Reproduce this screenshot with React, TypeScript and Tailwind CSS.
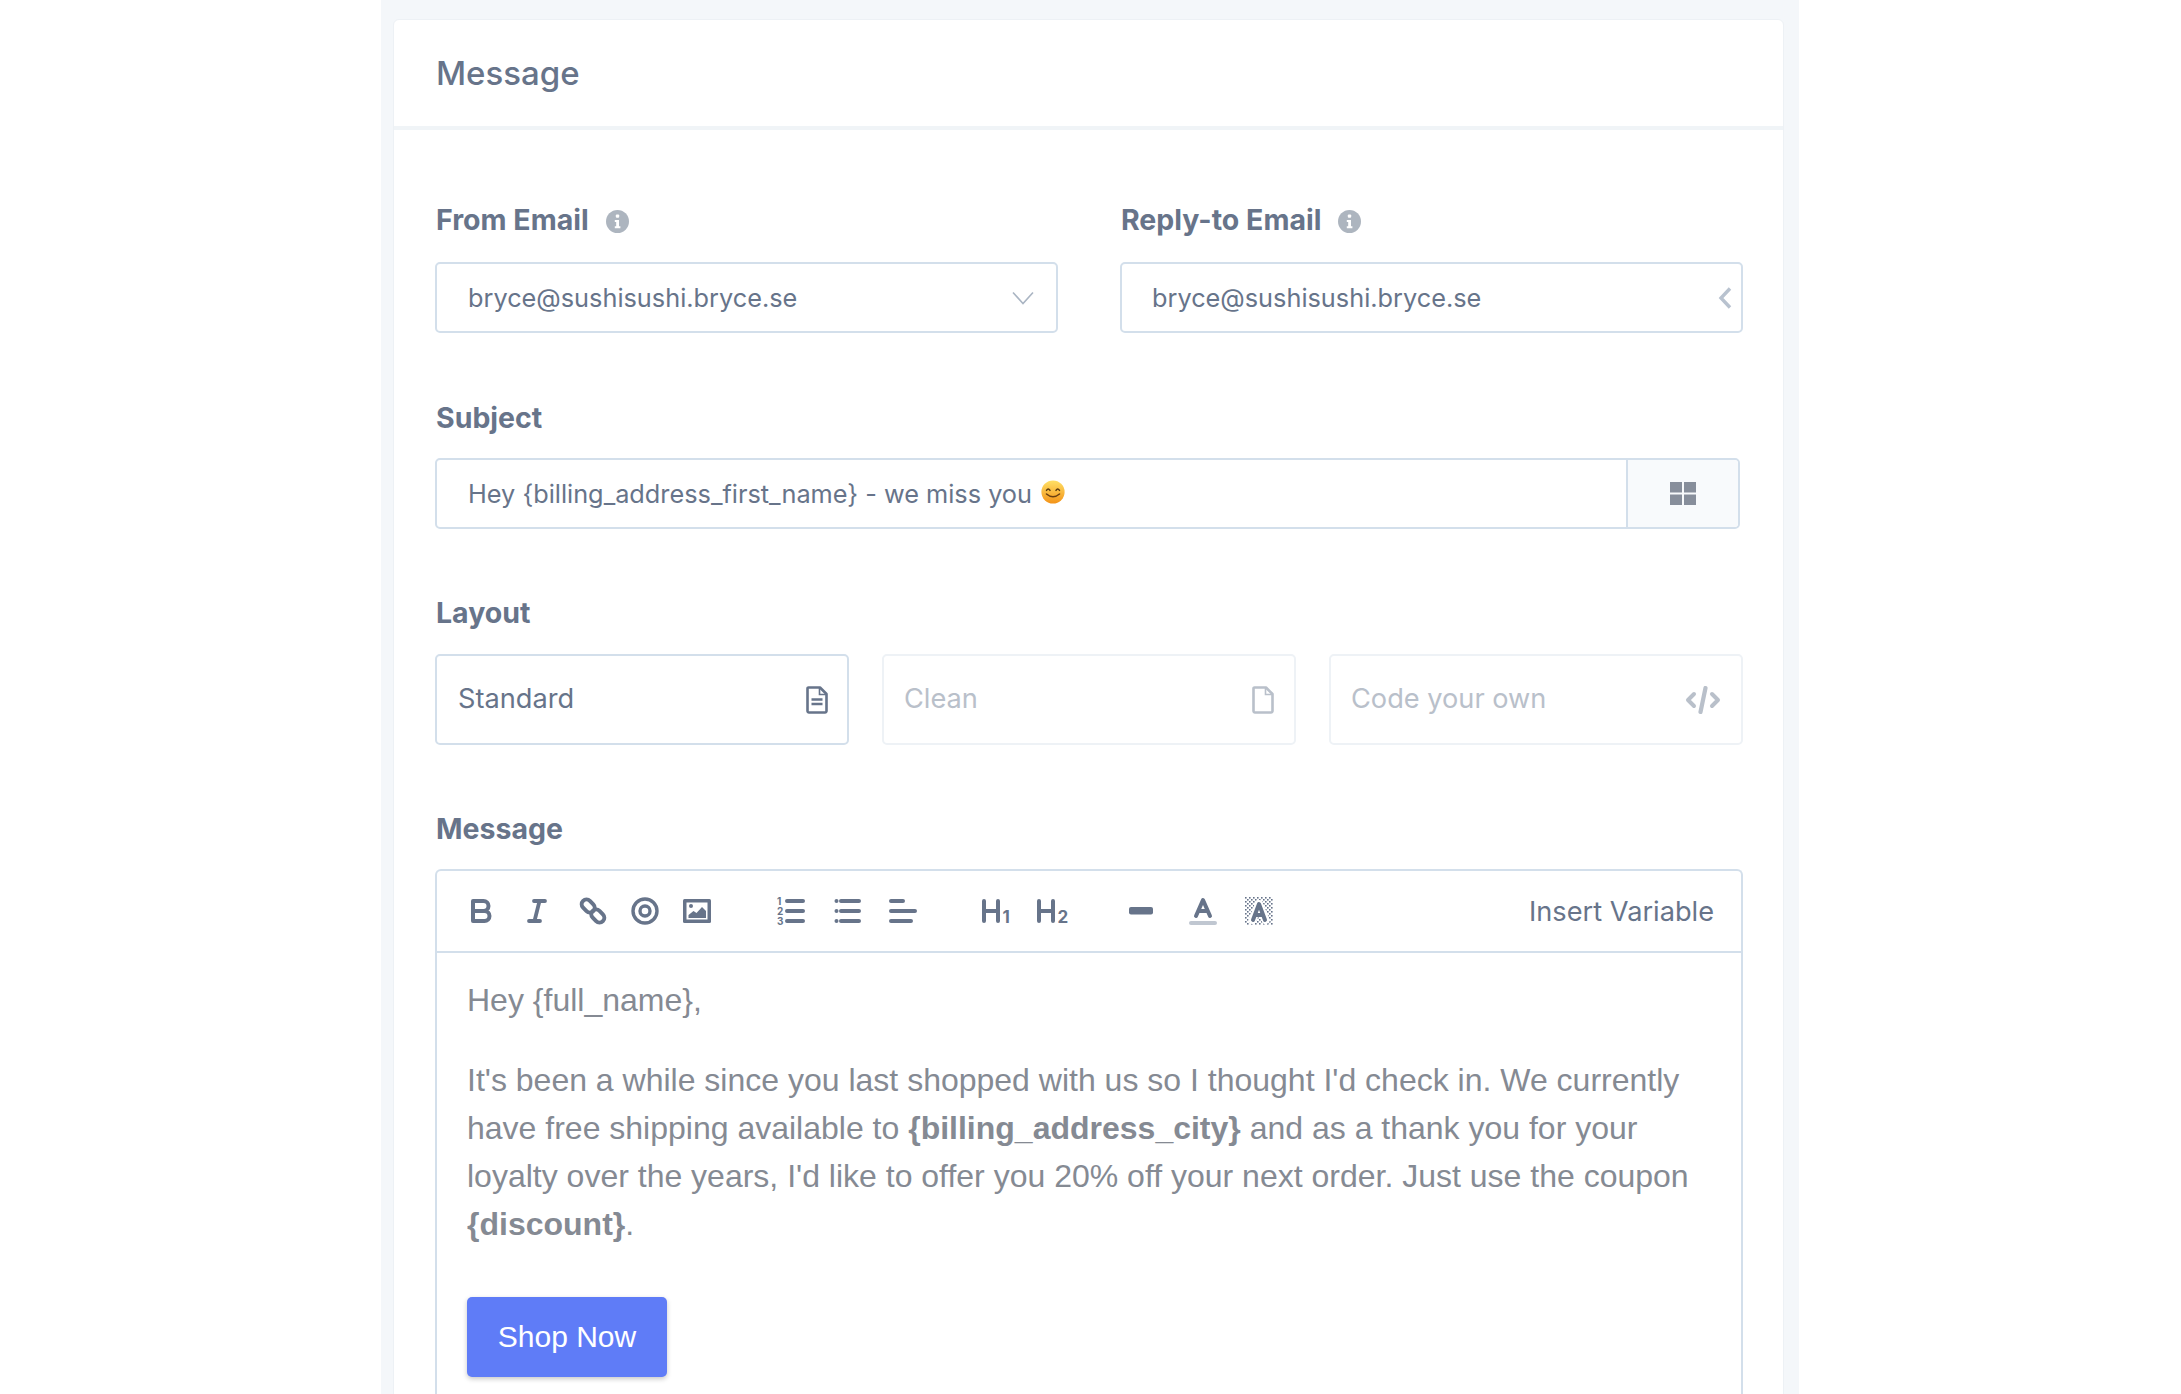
const INK = "#67748a";
const MUTE = "#b9c0ca";

function Info() {
  return (
    <svg width="23" height="23" viewBox="0 0 23 23" className="ml-[17px] mt-[3px] shrink-0">
      <circle cx="11.5" cy="11.5" r="11.5" fill="#adb5bf" />
      <rect x="9.8" y="4.5" width="3.4" height="3.2" rx="1" fill="#fff" />
      <path d="M8.8 10h4.2v6.2h1.4v2H8.8v-2h1.4V12H8.8z" fill="#fff" />
    </svg>
  );
}

function Label({ children, info }: { children: React.ReactNode; info?: boolean }) {
  return (
    <div className="flex h-[36px] items-center pl-[1px] text-[28.5px] font-bold leading-[36px] text-[#67748a]">
      <span>{children}</span>
      {info && <Info />}
    </div>
  );
}

function Emoji() {
  return (
    <svg width="24" height="24" viewBox="0 0 24 24" className="ml-[9px] mt-[-4px] shrink-0">
      <defs>
        <linearGradient id="emojiFace" x1="0" y1="0" x2="0" y2="1">
          <stop offset="0" stopColor="#ffe066" />
          <stop offset="1" stopColor="#f39318" />
        </linearGradient>
      </defs>
      <circle cx="12" cy="12" r="11.6" fill="url(#emojiFace)" />
      <path d="M5.5 10.4q1.7-2.8 3.5 0M15 10.4q1.7-2.8 3.5 0" fill="none" stroke="#5a3a10" strokeWidth="1.5" strokeLinecap="round" />
      <path d="M5.5 14q6.5 5.5 13 0" fill="none" stroke="#6a3f10" strokeWidth="1.6" strokeLinecap="round" />
    </svg>
  );
}

function FileIcon({ color, lines }: { color: string; lines?: boolean }) {
  return (
    <svg width="22" height="28" viewBox="0 0 22 28">
      <path d="M2.5 1.5H14L20.5 8V25a1.5 1.5 0 0 1-1.5 1.5H3A1.5 1.5 0 0 1 1.5 25V2.5a1 1 0 0 1 1-1z" fill="none" stroke={color} strokeWidth="2.6" strokeLinejoin="round" />
      <path d="M13.5 2V8.5H20" fill="none" stroke={color} strokeWidth="1.6" />
      {lines && <path d="M5.5 13.5h11M5.5 18h11" stroke={color} strokeWidth="2.6" />}
    </svg>
  );
}

function CodeIcon() {
  return (
    <svg width="36" height="28" viewBox="0 0 36 28">
      <path d="M9 8L3 14l6 6M27 8l6 6-6 6" fill="none" stroke={MUTE} strokeWidth="4" strokeLinecap="round" strokeLinejoin="round" />
      <path d="M20.5 2L15.5 26" fill="none" stroke={MUTE} strokeWidth="4.2" strokeLinecap="round" />
    </svg>
  );
}

function LayoutCard({ name, active, icon }: { name: string; active?: boolean; icon: React.ReactNode }) {
  return (
    <div
      className={`flex h-[91px] flex-1 items-center justify-between rounded-[5px] border-2 text-[27.2px] ${
        active
          ? "border-[#d3dfeb] pl-[21px] pr-[19px] text-[#67748a]"
          : "border-[#eef2f6] pl-[20px] pr-[20px] text-[#b9c0ca]"
      }`}
    >
      <span>{name}</span>
      {icon}
    </div>
  );
}

const S = { fill: "none", stroke: INK, strokeLinecap: "round" as const, strokeLinejoin: "round" as const };
const NUM = { fontFamily: "Inter, sans-serif", fontWeight: 700, fill: INK };

function Tool({ children, ml, w = 28 }: { children: React.ReactNode; ml: number; w?: number }) {
  return (
    <svg width={w} height="28" viewBox={`0 0 ${w} 28`} className="shrink-0 overflow-visible" style={{ marginLeft: ml }}>
      {children}
    </svg>
  );
}

function Toolbar() {
  return (
    <div className="flex h-[82px] items-center border-b-2 border-[#d3dfeb] pl-[30px] pr-[27px]">
      <Tool ml={0}>
        <path d="M6 4h10.5a5 5 0 0 1 0 10H6zM6 14h11.5a5 5 0 0 1 0 10H6z" {...S} strokeWidth="4" />
      </Tool>
      <Tool ml={28}>
        <path d="M11 4h11M6 24h11M16.5 4l-5 20" {...S} strokeWidth="3.8" />
      </Tool>
      <Tool ml={28}>
        <g {...S} strokeWidth="4">
          <rect x="2" y="4.2" width="14.4" height="9.6" rx="4.8" transform="rotate(45 9.2 9)" />
          <rect x="11.6" y="14.2" width="14.4" height="9.6" rx="4.8" transform="rotate(45 18.8 19)" />
        </g>
      </Tool>
      <Tool ml={24}>
        <circle cx="14" cy="14" r="12" {...S} strokeWidth="3.4" />
        <circle cx="14" cy="14" r="5" {...S} strokeWidth="3.4" />
      </Tool>
      <Tool ml={24}>
        <rect x="0" y="2" width="28" height="24" rx="1.5" fill={INK} />
        <rect x="3.5" y="5.5" width="21" height="17" fill="#fff" />
        <circle cx="8" cy="9" r="2" fill={INK} />
        <path d="M5.5 21v-3l5-4 3 2 5.5-6 4 4v7z" fill={INK} />
      </Tool>
      <Tool ml={66}>
        <text x="0" y="7.7" fontSize="10" {...NUM}>1</text>
        <text x="0" y="17.7" fontSize="10" {...NUM}>2</text>
        <text x="0" y="27.7" fontSize="10" {...NUM}>3</text>
        <path d="M10 4h16M10 14h16M10 24h16" {...S} strokeWidth="4" />
      </Tool>
      <Tool ml={28}>
        <circle cx="3.5" cy="4" r="2" fill={INK} />
        <circle cx="3.5" cy="14" r="2" fill={INK} />
        <circle cx="3.5" cy="24" r="2" fill={INK} />
        <path d="M8 4h18M8 14h18M8 24h18" {...S} strokeWidth="4" />
      </Tool>
      <Tool ml={28}>
        <path d="M2 4h12M2 14h24M2 24h20" {...S} strokeWidth="4" />
      </Tool>
      <Tool ml={65} w={32}>
        <path d="M2 4v20M16 4v20M2 14h14" {...S} strokeWidth="4" />
        <text x="20.5" y="26" fontSize="17" {...NUM}>1</text>
      </Tool>
      <Tool ml={23} w={32}>
        <path d="M2 4v20M16 4v20M2 14h14" {...S} strokeWidth="4" />
        <text x="20.5" y="26" fontSize="17" {...NUM}>2</text>
      </Tool>
      <Tool ml={58}>
        <rect x="2" y="10" width="24" height="7.5" rx="2" fill={INK} />
      </Tool>
      <Tool ml={34}>
        <path d="M7 19L14 3l7 16M9.5 14h9" {...S} strokeWidth="4" />
        <rect x="0" y="24" width="28" height="4" rx="2" fill="#c0c7d1" />
      </Tool>
      <Tool ml={28}>
        <defs>
          <pattern id="hatch" width="4" height="4" patternUnits="userSpaceOnUse">
            <rect width="1.6" height="1.6" fill={INK} />
            <rect x="2" y="2" width="1.6" height="1.6" fill={INK} />
          </pattern>
        </defs>
        <rect width="28" height="28" fill="url(#hatch)" />
        <path d="M7.5 23L14 7l6.5 16" fill="none" stroke="#fff" strokeWidth="8" strokeLinecap="round" strokeLinejoin="round" />
        <path d="M8 23L14 7l6 16M10 18h8" {...S} strokeWidth="4" />
      </Tool>
      <span className="ml-auto mt-[2px] text-[27.2px] leading-none text-[#67748a]">Insert Variable</span>
    </div>
  );
}

export default function App() {
  return (
    <div
      className="h-[1394px] overflow-hidden bg-white"
      style={{ fontFamily: "Inter, 'Noto Sans', sans-serif" }}
    >
      <div className="ml-[381px] h-[1394px] w-[1418px] bg-[#f4f7fa] pl-[12px] pr-[15px] pt-[19px]">
        <div className="h-[1500px] rounded-[6px] border border-[#edf1f5] bg-white">
          <div className="flex h-[110px] items-center border-b-4 border-[#f0f4f7] pl-[42px] pt-[2px] text-[33px] font-medium text-[#67748a]">
            Message
          </div>
          <div className="pl-[41px] pr-[40px] pt-[72px]">
            <div className="flex gap-[62px]">
              <div className="flex-1">
                <Label info>From Email</Label>
                <div className="mt-[24px] flex h-[71px] items-center justify-between rounded-[5px] border-2 border-[#d3dfeb] pl-[31px] pr-[22px] text-[25.3px] text-[#67748a]">
                  <span>bryce@sushisushi.bryce.se</span>
                  <svg width="22" height="14" viewBox="0 0 22 14">
                    <path d="M1 1.5l10 11 10-11" fill="none" stroke="#aab5c3" strokeWidth="1.6" />
                  </svg>
                </div>
              </div>
              <div className="flex-1">
                <Label info>Reply-to Email</Label>
                <div className="mt-[24px] flex h-[71px] items-center justify-between rounded-[5px] border-2 border-[#d3dfeb] pl-[30px] pr-[9px] text-[25.3px] text-[#67748a]">
                  <span>bryce@sushisushi.bryce.se</span>
                  <svg width="14" height="22" viewBox="0 0 14 22">
                    <path d="M12 1.5L3 11l9 9.5" fill="none" stroke="#b8c2cf" strokeWidth="3.4" />
                  </svg>
                </div>
              </div>
            </div>

            <div className="mt-[67px]">
              <Label>Subject</Label>
              <div className="mt-[22px] flex h-[71px] w-[1305px] rounded-[5px] border-2 border-[#d3dfeb] text-[25.3px] text-[#67748a]">
                <div className="flex flex-1 items-center pl-[31px]">
                  <span>Hey {"{billing_address_first_name}"} - we miss you</span>
                  <Emoji />
                </div>
                <div className="flex w-[112px] items-center justify-center rounded-r-[4px] border-l-2 border-[#d3dfeb] bg-[#f8fafc]">
                  <svg width="26" height="23" viewBox="0 0 26 23">
                    <rect width="12" height="10.5" fill="#878e9b" />
                    <rect x="14" width="12" height="10.5" fill="#878e9b" />
                    <rect y="12.5" width="12" height="10.5" fill="#878e9b" />
                    <rect x="14" y="12.5" width="12" height="10.5" fill="#878e9b" />
                  </svg>
                </div>
              </div>
            </div>

            <div className="mt-[66px]">
              <Label>Layout</Label>
              <div className="mt-[23px] flex gap-[33px]">
                <LayoutCard name="Standard" active icon={<FileIcon color={INK} lines />} />
                <LayoutCard name="Clean" icon={<FileIcon color={MUTE} />} />
                <LayoutCard name="Code your own" icon={<CodeIcon />} />
              </div>
            </div>

            <div className="mt-[66px]">
              <Label>Message</Label>
              <div className="mt-[22px] h-[700px] rounded-t-[6px] border-2 border-b-0 border-[#d3dfeb]">
                <Toolbar />
                <div
                  className="pl-[30px] pr-[30px] pt-[23px] text-[32px] leading-[48px] text-[#858a93]"
                  style={{ fontFamily: "'Liberation Sans', Arial, sans-serif" }}
                >
                  <p>Hey {"{full_name}"},</p>
                  <p className="mt-[32px]">
                    It's been a while since you last shopped with us so I thought I'd check in. We currently have free
                    shipping available to <b>{"{billing_address_city}"}</b> and as a thank you for your loyalty over the
                    years, I'd like to offer you 20% off your next order. Just use the coupon <b>{"{discount}"}</b>.
                  </p>
                  <div className="mt-[49px] flex h-[80px] w-[200px] items-center justify-center rounded-[5px] bg-[#5f7cf7] text-[30px] text-white shadow-[0_2px_5px_rgba(0,0,0,0.22)]">
                    Shop Now
                  </div>
                </div>
              </div>
            </div>
          </div>
        </div>
      </div>
    </div>
  );
}
